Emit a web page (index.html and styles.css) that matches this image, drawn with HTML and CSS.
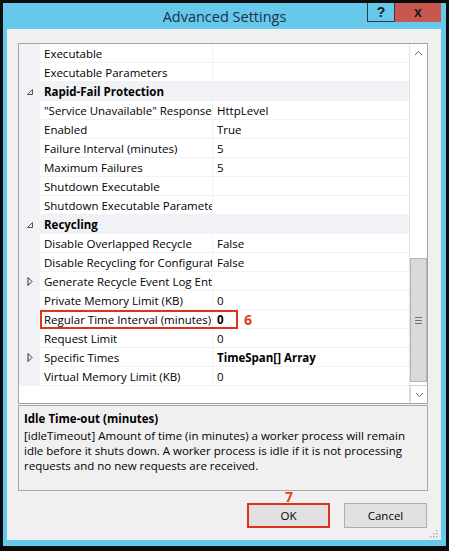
FILE: index.html
```html
<!DOCTYPE html>
<html lang="en">
<head>
  <meta charset="UTF-8">
  <title>Advanced Settings</title>
  <link rel="stylesheet" href="styles.css">
</head>
<body>
  <div class="window">
    <div class="titlebar">
      <span></span>
      <span class="title">Advanced Settings</span>
      <div class="caption">
        <button class="cap help">?</button>
        <button class="cap close">x</button>
      </div>
    </div>

    <div class="client">
      <div class="grid">
        <div class="rows">
          <div class="row"><span class="gutter"></span><span class="name">Executable</span><span class="value"></span></div>
          <div class="row"><span class="gutter"></span><span class="name">Executable Parameters</span><span class="value"></span></div>
          <div class="row category">
            <span class="gutter"><svg width="8" height="8" viewBox="0 0 8 8"><polygon points="6.5,1.5 6.5,6.5 1.5,6.5" fill="none" stroke="#555" stroke-width="1"/></svg></span>
            <span class="name">Rapid-Fail Protection</span>
          </div>
          <div class="row"><span class="gutter"></span><span class="name">"Service Unavailable" Response Type</span><span class="value">HttpLevel</span></div>
          <div class="row"><span class="gutter"></span><span class="name">Enabled</span><span class="value">True</span></div>
          <div class="row"><span class="gutter"></span><span class="name">Failure Interval (minutes)</span><span class="value">5</span></div>
          <div class="row"><span class="gutter"></span><span class="name">Maximum Failures</span><span class="value">5</span></div>
          <div class="row"><span class="gutter"></span><span class="name">Shutdown Executable</span><span class="value"></span></div>
          <div class="row"><span class="gutter"></span><span class="name">Shutdown Executable Parameters</span><span class="value"></span></div>
          <div class="row category">
            <span class="gutter"><svg width="8" height="8" viewBox="0 0 8 8"><polygon points="6.5,1.5 6.5,6.5 1.5,6.5" fill="none" stroke="#555" stroke-width="1"/></svg></span>
            <span class="name">Recycling</span>
          </div>
          <div class="row"><span class="gutter"></span><span class="name">Disable Overlapped Recycle</span><span class="value">False</span></div>
          <div class="row"><span class="gutter"></span><span class="name">Disable Recycling for Configuration Changes</span><span class="value">False</span></div>
          <div class="row">
            <span class="gutter"><svg width="6" height="9" viewBox="0 0 6 9"><polygon points="1,0.5 5,4.5 1,8.5" fill="none" stroke="#333" stroke-width="1"/></svg></span>
            <span class="name">Generate Recycle Event Log Entry</span><span class="value"></span>
          </div>
          <div class="row"><span class="gutter"></span><span class="name">Private Memory Limit (KB)</span><span class="value">0</span></div>
          <div class="row marked">
            <span class="gutter"></span><span class="name">Regular Time Interval (minutes)</span><span class="value strong">0</span>
            <span class="mark-box"></span>
            <span class="mark-num">6</span>
          </div>
          <div class="row"><span class="gutter"></span><span class="name">Request Limit</span><span class="value">0</span></div>
          <div class="row">
            <span class="gutter"><svg width="6" height="9" viewBox="0 0 6 9"><polygon points="1,0.5 5,4.5 1,8.5" fill="none" stroke="#333" stroke-width="1"/></svg></span>
            <span class="name">Specific Times</span><span class="value strong">TimeSpan[] Array</span>
          </div>
          <div class="row"><span class="gutter"></span><span class="name">Virtual Memory Limit (KB)</span><span class="value">0</span></div>
        </div>

        <div class="scrollbar">
          <div class="arrow">
            <svg width="9" height="6" viewBox="0 0 9 6"><polyline points="1,5 4.5,1.5 8,5" fill="none" stroke="#666" stroke-width="1"/></svg>
          </div>
          <div class="track">
            <div class="thumb">
              <svg width="7" height="7" viewBox="0 0 7 7"><rect x="0" y="0" width="7" height="1" fill="#707070"/><rect x="0" y="3" width="7" height="1" fill="#707070"/><rect x="0" y="6" width="7" height="1" fill="#707070"/></svg>
            </div>
          </div>
          <div class="arrow">
            <svg width="9" height="6" viewBox="0 0 9 6"><polyline points="1,1 4.5,4.5 8,1" fill="none" stroke="#666" stroke-width="1"/></svg>
          </div>
        </div>
      </div>

      <div class="desc">
        <div class="desc-title">Idle Time-out (minutes)</div>
        <p class="desc-text">[idleTimeout] Amount of time (in minutes) a worker process will remain idle before it shuts down. A worker process is idle if it is not processing requests and no new requests are received.</p>
      </div>

      <div class="buttons">
        <button class="button ok">OK<span class="mark-num step">7</span></button>
        <button class="button">Cancel</button>
      </div>

      <svg class="grip" width="8" height="8" viewBox="0 0 8 8">
        <rect x="6" y="0" width="1.5" height="1.5" fill="#b0b0b0"/>
        <rect x="3" y="3" width="1.5" height="1.5" fill="#b0b0b0"/>
        <rect x="6" y="3" width="1.5" height="1.5" fill="#b0b0b0"/>
        <rect x="0" y="6" width="1.5" height="1.5" fill="#b0b0b0"/>
        <rect x="3" y="6" width="1.5" height="1.5" fill="#b0b0b0"/>
        <rect x="6" y="6" width="1.5" height="1.5" fill="#b0b0b0"/>
      </svg>
    </div>
  </div>
</body>
</html>
```

FILE: styles.css
```css
body {
  margin: 0;
  background-color: #0c0c0c;
  font-family: 'Open Sans', sans-serif;
  font-size: 11.5px;
  color: #000;
}

.window {
  margin: 3px 0 0 3px;
  width: 443px;
  height: 543px;
  background-color: #66c8ea;
  display: flex;
  flex-direction: column;
}

.titlebar {
  height: 26px;
  display: grid;
  grid-template-columns: 1fr auto 1fr;
}

.title {
  font-size: 14.5px;
  line-height: 27px;
  color: #1d3049;
}

.caption {
  justify-self: end;
  display: flex;
  margin-right: 5px;
}

.cap {
  height: 19px;
  border: none;
  padding: 0;
  font-family: 'Liberation Sans', sans-serif;
  font-weight: bold;
  font-size: 14px;
  line-height: 17px;
  color: #1a1a1a;
  cursor: default;
}

.help {
  width: 28px;
  background-color: #66c8ea;
  border: 1px solid #2c3b44;
  border-top: none;
}

.close {
  width: 46px;
  background-color: #c8574d;
}

.client {
  position: relative;
  flex: 1;
  margin: 0 5px 6px 4px;
  padding: 14px 13px 12px 11px;
  background-color: #f0f0f0;
  display: flex;
  flex-direction: column;
}

/* property grid */
.grid {
  height: 361px;
  box-sizing: border-box;
  border: 1px solid #a3a3a3;
  background-color: #fff;
  display: flex;
}

.rows {
  flex: 1;
}

.row {
  position: relative;
  display: flex;
  height: 19px;
  line-height: 19px;
}

.gutter {
  width: 21px;
  flex: none;
  background-color: #f1f2f5;
  display: flex;
  align-items: center;
  justify-content: center;
  padding-left: 1px;
  box-sizing: border-box;
}

.name {
  width: 173px;
  flex: none;
  padding-left: 4px;
  box-sizing: border-box;
  white-space: nowrap;
  overflow: hidden;
  border-bottom: 1px solid #f1f2f5;
  border-right: 1px solid #f1f2f5;
}

.value {
  flex: 1;
  padding-left: 4px;
  white-space: nowrap;
  overflow: hidden;
  border-bottom: 1px solid #f1f2f5;
}

.strong {
  font-weight: bold;
}

.category {
  background-color: #f1f2f5;
}

.category .name {
  flex: 1;
  font-weight: bold;
  border: none;
}

/* red step markers */
.mark-box {
  position: absolute;
  left: 21px;
  top: 0;
  width: 198px;
  height: 19px;
  box-sizing: border-box;
  border: 2px solid #e0301f;
}

.mark-num {
  position: absolute;
  left: 225px;
  top: 0;
  color: #e0401f;
  font-weight: bold;
  font-size: 14px;
  line-height: 19px;
}

.step {
  left: 36px;
  top: -18px;
}

/* scrollbar */
.scrollbar {
  width: 17px;
  border-left: 1px solid #e3e3e3;
  display: flex;
  flex-direction: column;
}

.arrow {
  height: 17px;
  display: flex;
  align-items: center;
  justify-content: center;
}

.track {
  flex: 1;
  display: flex;
  flex-direction: column;
  justify-content: flex-end;
  padding-bottom: 3px;
}

.thumb {
  height: 124px;
  box-sizing: border-box;
  background-color: #dadada;
  border: 1px solid #b4b4b4;
  display: flex;
  align-items: center;
  justify-content: center;
}

.scrollbar .arrow:last-child {
  border: 1px solid #d4d4d4;
  border-right: none;
  border-bottom: none;
}

/* description panel */
.desc {
  margin-top: 1px;
  height: 86px;
  box-sizing: border-box;
  border: 1px solid #a8a8a8;
  padding: 5px 5px 0 5px;
  line-height: 15px;
}

.desc-title {
  font-weight: bold;
}

.desc-text {
  margin: 2px 0 0 0;
}

/* dialog buttons */
.buttons {
  margin-top: 12px;
  margin-right: 1px;
  display: flex;
  justify-content: flex-end;
  gap: 14px;
}

.button {
  position: relative;
  width: 83px;
  height: 25px;
  box-sizing: border-box;
  background-color: #e1e1e1;
  border: 1px solid #adadad;
  font-family: 'Open Sans', sans-serif;
  font-size: 11.5px;
  color: #000;
  padding: 0;
}

.ok {
  border: 2px solid #e0301f;
}

.grip {
  position: absolute;
  right: 3px;
  bottom: 2px;
}
```
